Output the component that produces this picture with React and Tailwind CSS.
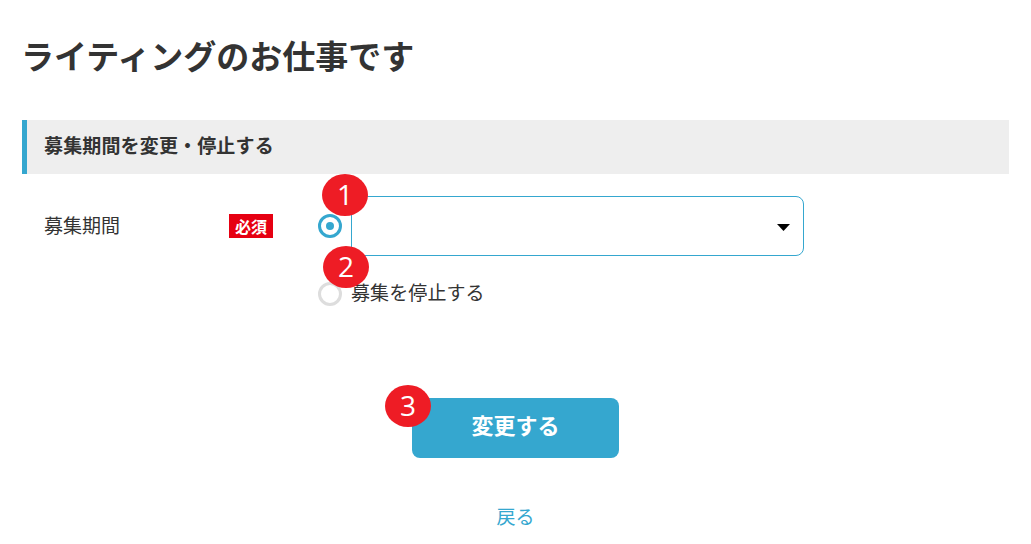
const font = { fontFamily: '"Noto Sans CJK JP", sans-serif' };

function Marker({ n, className }) {
  return (
    <span
      className={`absolute flex h-[42px] w-[46px] items-center justify-center rounded-[50%] bg-[#ee1c25] pb-[3px] text-[28px] leading-none font-normal text-white ${className}`}
      style={{ fontFamily: '"Open Sans", sans-serif' }}
    >
      {n}
    </span>
  );
}

export default function App() {
  return (
    <div className="h-[544px] w-[1031px] overflow-hidden bg-white pl-[22px] pr-[22px] text-[#333333]" style={font}>
      <h1 className="pt-[33px] pb-[3px] -ml-[1px] text-[33px] leading-[44px] font-bold">ライティングのお仕事です</h1>

      <h2 className="mt-[40px] flex h-[54px] items-center border-l-[5px] border-[#35a7cf] bg-[#eeeeee] pb-[4px] pl-[17px] text-[19px] font-bold tracking-[0.15px]">
        募集期間を変更・停止する
      </h2>

      <div className="mt-[22px] flex items-start">
        <div className="flex h-[60px] w-[207px] shrink-0 items-center pb-[2px] pl-[22px] text-[19px]">募集期間</div>
        <span className="mt-[18px] flex h-[24px] w-[44px] shrink-0 items-center justify-center bg-[#e60012] text-[16px] leading-none font-bold text-white">
          必須
        </span>
        <div className="relative ml-[45px] flex flex-col">
          <div className="flex h-[60px] items-center">
            <span className="flex h-[24px] w-[24px] items-center justify-center rounded-full border-[3px] border-[#35a7cf]">
              <span className="h-[8px] w-[8px] rounded-full bg-[#35a7cf]" />
            </span>
            <div className="relative ml-[9px] h-[60px] w-[453px] rounded-[8px] border border-[#35a7cf]">
              <svg className="absolute top-[27px] right-[13px]" width="13" height="7" viewBox="0 0 13 7">
                <path d="M0 0H13L6.5 7Z" fill="#000" />
              </svg>
            </div>
          </div>
          <div className="mt-[26px] flex h-[24px] items-center">
            <span className="h-[24px] w-[24px] rounded-full border-[3px] border-[#dddddd]" />
            <span className="ml-[9px] pb-[3px] text-[19px] tracking-[0.1px]">募集を停止する</span>
          </div>
          <Marker n="1" className="top-[-22px] left-[4px]" />
          <Marker n="2" className="top-[50px] left-[5px]" />
        </div>
      </div>

      <div className="mt-[92px] flex flex-col items-center">
        <div className="relative">
          <button className="block h-[60px] w-[207px] rounded-[8px] bg-[#35a7cf] pb-[7px] text-[22px] font-bold text-white">
            変更する
          </button>
          <Marker n="3" className="top-[-13px] left-[-27px]" />
        </div>
        <a className="mt-[43px] text-[19px] leading-[30px] text-[#35a7cf]">戻る</a>
      </div>
    </div>
  );
}
